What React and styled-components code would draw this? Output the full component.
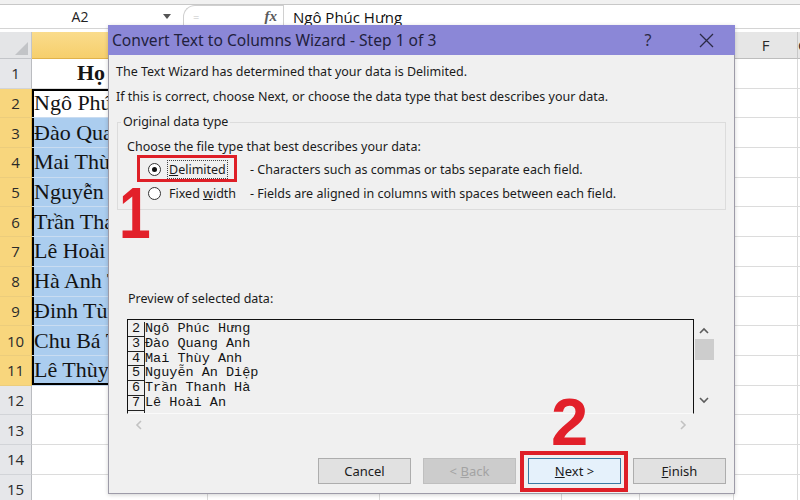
import React from "react";
import styled, { createGlobalStyle } from "styled-components";

const GlobalStyle = createGlobalStyle`
  html, body { margin: 0; padding: 0; background: #fff; }
  #root { width: 800px; height: 500px; overflow: hidden; }
`;

const Screen = styled.div`
  position: relative;
  width: 800px;
  height: 500px;
  overflow: hidden;
  background: #fff;
  font-family: "Open Sans", sans-serif;
`;

/* ---------- formula bar ---------- */

const RibbonEdge = styled.div`
  height: 4px;
  background: #f1f1f1;
  border-bottom: 1px solid #c8c8c8;
`;

const FormulaBar = styled.div`
  display: flex;
  align-items: center;
  height: 23px;
  border-bottom: 1px solid #d4d4d4;
  margin-bottom: 3px;
`;

const NameBox = styled.div`
  position: relative;
  width: 178px;
  height: 100%;
  display: flex;
  align-items: center;
  font-size: 14px;
  color: #222;
  span { width: 160px; text-align: center; }
`;

const DropArrow = styled.div`
  width: 0;
  height: 0;
  margin-left: 3px;
  border-left: 4px solid transparent;
  border-right: 4px solid transparent;
  border-top: 5px solid #555;
`;

const FxArea = styled.div`
  box-sizing: border-box;
  width: 100px;
  margin-left: 5px;
  height: 23px;
  margin-top: -1px;
  border: 1px solid #cfcfcf;
  border-right: none;
  border-bottom: none;
  border-radius: 12px 0 0 0;
  display: flex;
  align-items: center;
  justify-content: space-between;
  padding: 0 6px 0 9px;
`;

const Grip = styled.span`
  color: #c4c4c4;
  font-size: 11px;
`;

const Fx = styled.span`
  font-family: "Liberation Serif", serif;
  font-style: italic;
  font-weight: bold;
  font-size: 15px;
  color: #5a5a5a;
`;

const FormulaInput = styled.div`
  flex: 1;
  height: 100%;
  display: flex;
  align-items: center;
  padding-left: 9px;
  border-left: 1px solid #d0d0d0;
  font-size: 15px;
  color: #111;
`;

/* ---------- worksheet ---------- */

const Sheet = styled.div`
  display: grid;
  grid-template-columns: 32px 176px 172px 182px 78px 94px 64px 1fr;
  grid-template-rows: 27px;
  grid-auto-rows: 29.7px;
`;

const Corner = styled.div`
  position: relative;
  background: #e4e5e7;
  border-right: 1px solid #c3c5c9;
  border-bottom: 1px solid #c3c5c9;
  &::after {
    content: "";
    position: absolute;
    right: 3px;
    bottom: 3px;
    border-left: 13px solid transparent;
    border-bottom: 13px solid #c2c4c7;
  }
`;

const ColHead = styled.div`
  display: flex;
  align-items: center;
  justify-content: center;
  font-size: 15px;
  color: #2a2a2a;
  background: ${p => (p.$selected ? "linear-gradient(#fadc8c, #f6cf6c)" : "#e6e6e6")};
  border-right: 1px solid ${p => (p.$selected ? "#e2bb5a" : "#c8c8c8")};
  border-bottom: 1px solid ${p => (p.$selected ? "#e0b24a" : "#bdbdbd")};
`;

const RowHead = styled.div`
  display: flex;
  align-items: center;
  justify-content: center;
  font-size: 15px;
  color: #2b2b2b;
  background: ${p => (p.$selected ? "#f8d67d" : "#e6e7ea")};
  border-right: 1px solid ${p => (p.$selected ? "#e0b24a" : "#babcc0")};
  border-bottom: 1px solid ${p => (p.$selected ? "#eccd7c" : "#d2d4d8")};
`;

const Cell = styled.div`
  display: flex;
  align-items: center;
  padding-left: 2px;
  white-space: nowrap;
  font-family: "Liberation Serif", serif;
  font-size: 22px;
  color: #141414;
  background: ${p => (p.$selected && !p.$active ? "#abcdef" : "#fff")};
  border-right: 1px solid #d9d9d9;
  border-bottom: 1px solid ${p => (p.$selected ? "#c9dcf1" : "#dcdcdc")};
  box-shadow: ${p => p.$edge || "none"};
`;

const HeaderText = styled.span`
  font-weight: bold;
  padding-left: 43px;
`;

/* ---------- wizard dialog ---------- */

const Dialog = styled.div`
  position: absolute;
  left: 108px;
  top: 25px;
  width: 627px;
  height: 469px;
  box-sizing: border-box;
  display: flex;
  flex-direction: column;
  background: #f0f0f0;
  border: 1px solid #9d9ba8;
  border-top: none;
  box-shadow: 0 1px 4px rgba(0, 0, 0, 0.18);
  font-family: "Noto Sans", sans-serif;
  font-size: 12.5px;
  color: #1b1b1b;
`;

const TitleBar = styled.div`
  display: flex;
  align-items: center;
  height: 30px;
  margin: 0 -1px;
  padding-left: 4px;
  background: #8b87d7;
  color: #22213d;
`;

const Title = styled.div`
  flex: 1;
  font-size: 15.6px;
`;

const TitleButton = styled.div`
  width: 46px;
  height: 30px;
  display: flex;
  align-items: center;
  justify-content: center;
  font-size: 16px;
  color: #2b2a45;
  & + & { margin-left: 12px; margin-right: 6px; }
`;

const Body = styled.div`
  flex: 1;
  display: flex;
  flex-direction: column;
  padding: 4px 8px 0 7px;
`;

const Line = styled.div`
  line-height: 25px;
`;

const Group = styled.fieldset`
  margin: 3px 0 0 1px;
  padding: 5px 9px 4px 9px;
  border: 1px solid #dcdcdc;
  min-width: 0;
`;

const Legend = styled.legend`
  margin-left: -6px;
  padding: 0 2px;
  line-height: 20px;
`;

const Choose = styled.div`
  line-height: 20px;
`;

const RadioRow = styled.div`
  display: flex;
  align-items: center;
  height: 24px;
  padding-left: 21px;
`;

const RadioOption = styled.div`
  width: 102px;
  display: flex;
  align-items: center;
`;

const Radio = styled.span`
  box-sizing: border-box;
  width: 13px;
  height: 13px;
  border-radius: 50%;
  border: 1px solid #333;
  background: #fff;
  display: flex;
  align-items: center;
  justify-content: center;
  margin-right: 7px;
  &::after {
    content: "";
    width: 5px;
    height: 5px;
    border-radius: 50%;
    background: ${p => (p.$checked ? "#111" : "transparent")};
  }
`;

const OptionLabel = styled.span`
  padding: 0 1px;
  line-height: 17px;
  outline: ${p => (p.$focused ? "1px dotted #444" : "none")};
`;

const PreviewLabel = styled.div`
  margin-top: 79px;
  line-height: 20px;
  padding-left: 12px;
`;

const Preview = styled.div`
  margin: 10px 0 0 11px;
  width: 587px;
  height: 117px;
  display: grid;
  grid-template-columns: 1fr 20px;
  grid-template-rows: 95px 22px;
`;

const DataPane = styled.div`
  box-sizing: border-box;
  overflow: hidden;
  border: 1px solid #111;
  border-bottom: 1px solid #fafafa;
  padding-top: 2px;
  font-family: "Liberation Mono", monospace;
  font-size: 13.5px;
  color: #151515;
`;

const DataRow = styled.div`
  display: flex;
  height: 14.8px;
  line-height: 14.8px;
  white-space: pre;
`;

const RowNo = styled.span`
  box-sizing: border-box;
  width: 17px;
  text-align: center;
  border-right: 1px solid #222;
  border-bottom: 1px solid #222;
`;

const VScroll = styled.div`
  display: flex;
  flex-direction: column;
  align-items: center;
  padding-top: 8px;
`;

const Thumb = styled.div`
  width: 19px;
  height: 21px;
  margin-top: 4px;
  background: #cdcdcd;
`;

const Spacer = styled.div`
  flex: 1;
`;

const DownSlot = styled.div`
  margin-bottom: 6px;
`;

const HScroll = styled.div`
  display: flex;
  align-items: center;
  justify-content: space-between;
  padding: 0 7px 0 8px;
`;

const ButtonRow = styled.div`
  display: flex;
  justify-content: flex-end;
  gap: 12px;
  margin-top: 22px;
`;

const Button = styled.div`
  box-sizing: border-box;
  width: 93px;
  height: 26px;
  display: flex;
  align-items: center;
  justify-content: center;
  white-space: pre;
  font-size: 13px;
  background: ${p => (p.$primary ? "#e5f1fb" : p.$disabled ? "#cccccc" : "#e1e1e1")};
  border: 1px solid ${p => (p.$primary ? "#3a7aa3" : p.$disabled ? "#bfbfbf" : "#adadad")};
  color: ${p => (p.$disabled ? "#a3a3a3" : "#1b1b1b")};
`;

/* ---------- red call-outs ---------- */

const Highlight = styled.div`
  position: absolute;
  box-sizing: border-box;
  border: ${p => p.$w}px solid #de1f27;
`;

const StepNo = styled.div`
  position: absolute;
  font-family: "Liberation Sans", sans-serif;
  font-weight: bold;
  line-height: 1;
  color: #e2202a;
  transform-origin: left top;
  transform: scaleX(${p => p.$squeeze || 1});
`;

const Chevron = ({ dir, color = "#5c5c5c" }) => {
  const d = {
    up: "M1 6 L5 2 L9 6",
    down: "M1 2 L5 6 L9 2",
    left: "M6 1 L2 5 L6 9",
    right: "M2 1 L6 5 L2 9",
  }[dir];
  const vertical = dir === "up" || dir === "down";
  return (
    <svg width={vertical ? 10 : 8} height={vertical ? 8 : 10} viewBox={vertical ? "0 0 10 8" : "0 0 8 10"}>
      <path d={d} fill="none" stroke={color} strokeWidth="1.6" />
    </svg>
  );
};

const names = [
  "Ngô Phúc Hưng",
  "Đào Quang Anh",
  "Mai Thùy Anh",
  "Nguyễn An Diệp",
  "Trần Thanh Hà",
  "Lê Hoài An",
  "Hà Anh Tuấn",
  "Đinh Tùng Lâm",
  "Chu Bá Thông",
  "Lê Thùy Dương",
];

const cols = ["A", "B", "C", "D", "E", "F", "G"];

function Worksheet() {
  const rows = [];
  for (let r = 1; r <= 15; r++) {
    const sel = r >= 2 && r <= 11;
    const edges = [];
    if (sel) edges.push("inset 2px 0 0 #000");
    if (r === 2) edges.push("inset 0 2px 0 #000");
    if (r === 11) edges.push("inset 0 -2px 0 #000");
    rows.push(<RowHead key={`h${r}`} $selected={sel}>{r}</RowHead>);
    cols.forEach((c, i) => {
      let content = null;
      if (i === 0 && r === 1) content = <HeaderText>Họ và tên</HeaderText>;
      if (i === 0 && sel) content = names[r - 2];
      rows.push(
        <Cell
          key={`${c}${r}`}
          $selected={i === 0 && sel}
          $active={i === 0 && r === 2}
          $edge={i === 0 && sel ? edges.join(", ") : null}
        >
          {content}
        </Cell>
      );
    });
  }
  return (
    <Sheet>
      <Corner />
      {cols.map((c, i) => (
        <ColHead key={c} $selected={i === 0}>{c}</ColHead>
      ))}
      {rows}
    </Sheet>
  );
}

// rows 2..7 fit in the preview pane; row 8 is only a sliver
const previewRows = names.slice(0, 6);

function Wizard() {
  return (
    <Dialog>
      <TitleBar>
        <Title>Convert Text to Columns Wizard - Step 1 of 3</Title>
        <TitleButton>?</TitleButton>
        <TitleButton>
          <svg width="15" height="15" viewBox="0 0 15 15">
            <path d="M1 1 L14 14 M14 1 L1 14" stroke="#2b2a45" strokeWidth="1.3" />
          </svg>
        </TitleButton>
      </TitleBar>
      <Body>
        <Line>The Text Wizard has determined that your data is Delimited.</Line>
        <Line>If this is correct, choose Next, or choose the data type that best describes your data.</Line>
        <Group>
          <Legend>Original data type</Legend>
          <Choose>Choose the file type that best describes your data:</Choose>
          <RadioRow>
            <RadioOption>
              <Radio $checked />
              <OptionLabel $focused><u>D</u>elimited</OptionLabel>
            </RadioOption>
            - Characters such as commas or tabs separate each field.
          </RadioRow>
          <RadioRow>
            <RadioOption>
              <Radio />
              <OptionLabel>Fixed <u>w</u>idth</OptionLabel>
            </RadioOption>
            - Fields are aligned in columns with spaces between each field.
          </RadioRow>
        </Group>
        <PreviewLabel>Preview of selected data:</PreviewLabel>
        <Preview>
          <DataPane>
            {previewRows.map((n, i) => (
              <DataRow key={n}>
                <RowNo>{i + 2}</RowNo>
                {n}
              </DataRow>
            ))}
            <DataRow>
              <RowNo> </RowNo>
            </DataRow>
          </DataPane>
          <VScroll>
            <Chevron dir="up" />
            <Thumb />
            <Spacer />
            <DownSlot>
              <Chevron dir="down" />
            </DownSlot>
          </VScroll>
          <HScroll>
            <Chevron dir="left" color="#c2c2c2" />
            <Chevron dir="right" color="#c2c2c2" />
          </HScroll>
        </Preview>
        <ButtonRow>
          <Button><span>Cancel</span></Button>
          <Button $disabled><span>{"< "}<u>B</u>ack</span></Button>
          <Button $primary><span><u>N</u>{"ext >"}</span></Button>
          <Button><span><u>F</u>inish</span></Button>
        </ButtonRow>
      </Body>
    </Dialog>
  );
}

export default function App() {
  return (
    <Screen>
      <GlobalStyle />
      <RibbonEdge />
      <FormulaBar>
        <NameBox>
          <span>A2</span>
          <DropArrow />
        </NameBox>
        <FxArea>
          <Grip>=</Grip>
          <Fx>fx</Fx>
        </FxArea>
        <FormulaInput>Ngô Phúc Hưng</FormulaInput>
      </FormulaBar>
      <Worksheet />
      <Wizard />
      <Highlight $w={3} style={{ left: 137, top: 155, width: 100, height: 27 }} />
      <StepNo $squeeze={0.78} style={{ left: 119, top: 176, fontSize: 73 }}>1</StepNo>
      <Highlight $w={4} style={{ left: 520, top: 451, width: 108, height: 41 }} />
      <StepNo style={{ left: 551, top: 388, fontSize: 67 }}>2</StepNo>
    </Screen>
  );
}
